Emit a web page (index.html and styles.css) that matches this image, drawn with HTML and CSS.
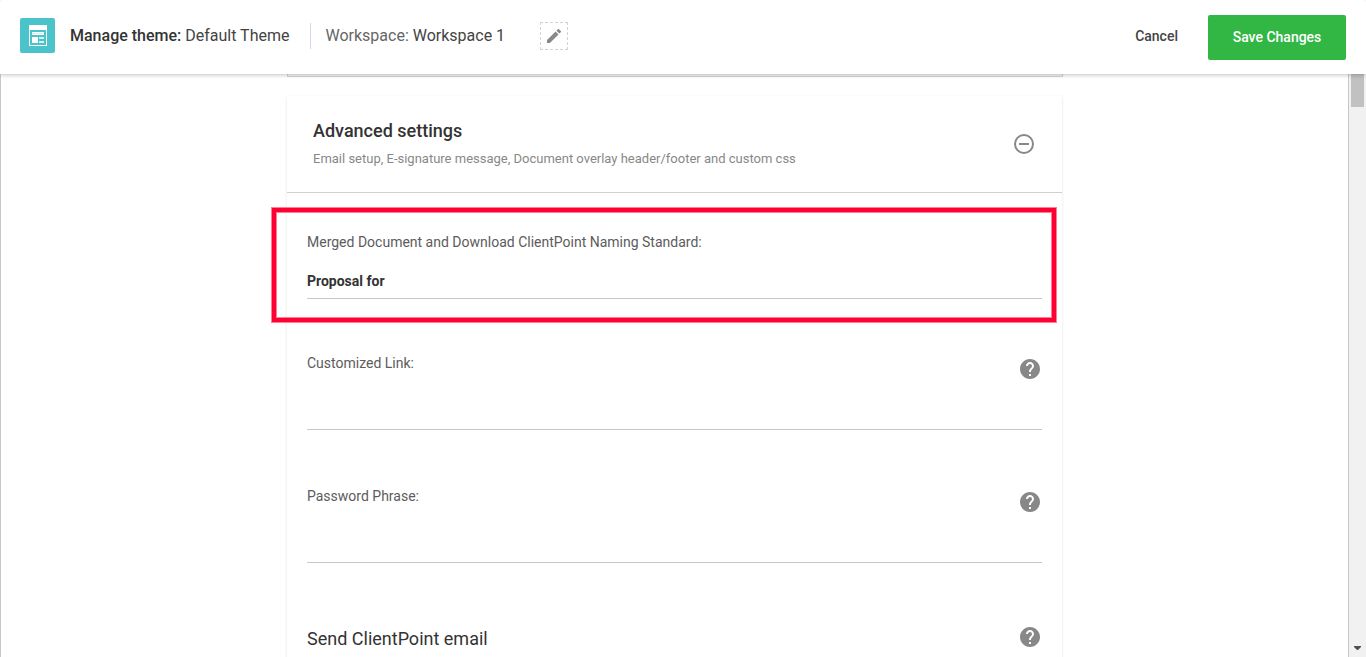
FILE: index.html
```html
<!DOCTYPE html>
<html lang="en">
<head>
    <meta charset="UTF-8">
    <title>Manage theme</title>
    <link rel="stylesheet" href="styles.css">
</head>
<body>
    <svg class="sprite">
        <symbol id="icon-help" viewBox="2 2 20 20">
            <path d="M12 2C6.48 2 2 6.48 2 12s4.48 10 10 10 10-4.48 10-10S17.52 2 12 2zm1 17h-2v-2h2v2zm2.07-7.75l-.9.92C13.45 12.9 13 13.5 13 15h-2v-.5c0-1.1.45-2.1 1.17-2.83l1.24-1.26c.37-.36.59-.86.59-1.41 0-1.1-.9-2-2-2s-2 .9-2 2H8c0-2.21 1.79-4 4-4s4 1.79 4 4c0 .88-.36 1.68-.93 2.25z"/>
        </symbol>
    </svg>
    <header class="topbar">
        <div class="logo">
            <svg width="18" height="21" viewBox="0 0 18 21">
                <path fill="#fff" d="M0 0h18v21H0z"/>
                <path fill="#4bc3cb" d="M1 5h16v15H1z"/>
                <path fill="#d5f1f3" d="M3 7h12v3H3z"/>
                <path fill="#fff" d="M3 7h12v1H3zM3 9h12v1H3zM3 12h6v6H3z"/>
                <path fill="#d5f1f3" d="M10 12h5v2h-5zM10 16h5v2h-5z"/>
            </svg>
        </div>
        <div class="theme-name"><b>Manage theme:</b> Default Theme</div>
        <div class="workspace">Workspace: <span>Workspace 1</span></div>
        <a href="#" class="edit">
            <svg width="14" height="14" viewBox="3 3 18 18"><path fill="#888" d="M3 17.25V21h3.75L17.81 9.94l-3.75-3.75L3 17.25zM20.71 7.04c.39-.39.39-1.02 0-1.41l-2.34-2.34c-.39-.39-1.02-.39-1.41 0l-1.83 1.83 3.75 3.75 1.83-1.83z"/></svg>
        </a>
        <div class="actions">
            <a href="#" class="cancel">Cancel</a>
            <a href="#" class="save">Save Changes</a>
        </div>
    </header>
    <div class="main">
        <div class="content">
            <div class="card-prev"></div>
            <div class="card">
                <div class="card-head">
                    <div>
                        <h2>Advanced settings</h2>
                        <p>Email setup, E-signature message, Document overlay header/footer and custom css</p>
                    </div>
                    <svg class="toggle" width="20" height="20" viewBox="0 0 20 20"><path fill="none" stroke="#888" stroke-width="2" d="M5 10h10M10 1a9 9 0 1 0 0 18 9 9 0 0 0 0-18z"/></svg>
                </div>
                <div class="fields">
                    <div class="field naming">
                        <div class="label">Merged Document and Download ClientPoint Naming Standard:</div>
                        <div class="value">Proposal for</div>
                    </div>
                    <div class="field">
                        <div class="label">Customized Link:</div>
                        <svg class="help"><use href="#icon-help"/></svg>
                    </div>
                    <div class="field">
                        <div class="label">Password Phrase:</div>
                        <svg class="help"><use href="#icon-help"/></svg>
                    </div>
                    <div class="section">
                        <h3>Send ClientPoint email</h3>
                        <svg class="help"><use href="#icon-help"/></svg>
                    </div>
                </div>
                <div class="highlight"></div>
            </div>
        </div>
        <div class="scrollbar">
            <div class="thumb"></div>
            <svg width="7" height="4" viewBox="0 0 7 4"><path fill="#505050" d="M0 0h7v1L4 4H3L0 1z"/></svg>
        </div>
    </div>
</body>
</html>
```

FILE: styles.css
```css
* {
    box-sizing: border-box;
}
body {
    margin: 0;
    height: 657px;
    overflow: hidden;
    background: #fff;
    font-family: Roboto, "Liberation Sans", sans-serif;
    font-size: 14px;
    color: #333;
}
a {
    color: inherit;
    text-decoration: none;
}
h2, h3, p {
    margin: 0;
}
.sprite {
    display: none;
}

/* top bar */
.topbar {
    position: relative;
    z-index: 2;
    display: flex;
    align-items: center;
    height: 74px;
    padding: 0 20px;
    background: #fff;
    border-radius: 3px 3px 0 0;
    box-shadow: 0 1px 4px rgba(0, 0, 0, .25);
    font-size: 16px;
}
.logo {
    width: 35px;
    height: 35px;
    padding: 7px 0 0 9px;
    margin-top: -3px;
    background: #4bc3cb;
    border-radius: 2px;
}
.logo svg, .edit svg {
    display: block;
}
.theme-name {
    margin: -3px 20.5px 0 15px;
    color: #444;
}
.theme-name b {
    font-weight: 500;
    color: #333;
}
.workspace {
    height: 26px;
    line-height: 26px;
    margin-top: -2px;
    padding-left: 14.5px;
    border-left: 1px solid #d5d6e3;
    color: #666;
}
.workspace span {
    color: #444;
}
.edit {
    width: 28px;
    height: 28px;
    margin: -2px 0 0 35px;
    padding: 6px;
    border: 1px dashed #d0d1de;
}
.actions {
    display: flex;
    align-items: center;
    margin-left: auto;
    font-size: 14px;
    font-weight: 500;
}
.cancel {
    margin: -2px 30px 0 0;
    color: #444;
}
.save {
    width: 138px;
    height: 45px;
    line-height: 45px;
    text-align: center;
    color: #fff;
    background: #32b644;
    border-radius: 2px;
}

/* scroll area */
.main {
    display: flex;
    height: 583px;
}
.content {
    flex: 1;
    border: solid #c8c8c8;
    border-width: 0 1px;
    padding-left: 286px;
}
.card-prev {
    width: 776px;
    height: 3px;
    background: #f5f5f5;
    border: 1px solid #d5d5d5;
    border-top: 0;
}
.card {
    position: relative;
    width: 775px;
    height: 580px;
    margin-top: 19px;
    box-shadow: 0 1px 3px rgba(0, 0, 0, .11);
}
.card-head {
    display: flex;
    justify-content: space-between;
    height: 97px;
    padding: 23px 28px 0 26px;
    border-bottom: 1px solid #d0d0d0;
}
.card-head h2 {
    font-size: 18px;
    line-height: 24px;
    font-weight: 500;
}
.card-head p {
    margin-top: 7px;
    font-size: 13px;
    line-height: 18px;
    color: #888;
}
.toggle {
    margin-top: 15px;
}
.fields {
    padding: 20px 20px 0;
}
.field {
    display: flex;
    justify-content: space-between;
    height: 86px;
    margin-bottom: 47px;
    padding-top: 9px;
    border-bottom: 1px solid #c8c8c8;
    line-height: 20px;
}
.label {
    color: #5c5c5c;
}
.naming {
    display: block;
    margin-bottom: 45px;
    padding-top: 19px;
}
.value {
    margin-top: 19px;
    font-weight: 700;
}
.help {
    width: 20px;
    height: 20px;
    margin: 6px 2px 0 0;
    fill: #888;
}
.section {
    display: flex;
    justify-content: space-between;
    padding-top: 10px;
}
.section .help {
    margin-top: 7px;
}
.section h3 {
    font-size: 18px;
    line-height: 38px;
    font-weight: 400;
}

/* frame drawn over the naming field */
.highlight {
    position: absolute;
    top: 112px;
    left: -15px;
    width: 784px;
    height: 114px;
    border: 4px solid #ff0032;
    box-shadow: 0 0 0 1px #ff7d96, inset 0 0 0 1px #ff7d96;
}

.scrollbar {
    display: flex;
    flex-direction: column;
    justify-content: space-between;
    align-items: center;
    width: 17px;
    padding-bottom: 7px;
    background: #f1f1f1;
}
.thumb {
    width: 13px;
    height: 33px;
    background: #c1c1c1;
}
```
